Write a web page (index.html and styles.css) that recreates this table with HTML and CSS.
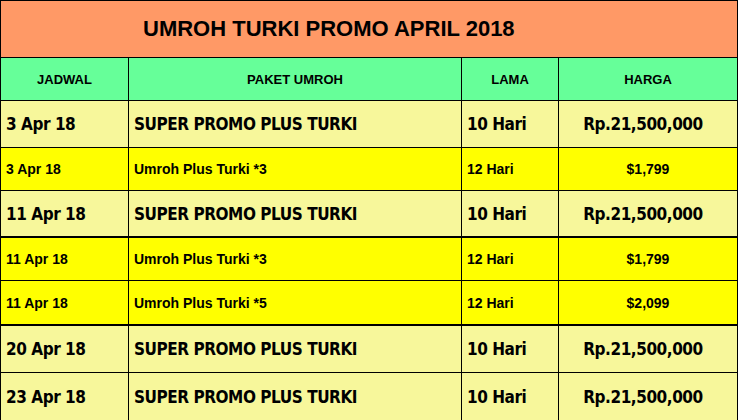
FILE: index.html
```html
<!DOCTYPE html>
<html>
<head>
<meta charset="utf-8">
<link rel="stylesheet" href="styles.css">
</head>
<body>
<div class="sheet">
  <div class="title">UMROH TURKI PROMO APRIL 2018</div>

  <div class="cell head center">JADWAL</div>
  <div class="cell head center">PAKET UMROH</div>
  <div class="cell head center">LAMA</div>
  <div class="cell head center">HARGA</div>

  <div class="cell big">3 Apr 18</div>
  <div class="cell big">SUPER PROMO PLUS TURKI</div>
  <div class="cell big">10 Hari</div>
  <div class="cell big center price">Rp.21,500,000</div>

  <div class="cell small">3 Apr 18</div>
  <div class="cell small">Umroh Plus Turki *3</div>
  <div class="cell small">12 Hari</div>
  <div class="cell small center">$1,799</div>

  <div class="cell big thick">11 Apr 18</div>
  <div class="cell big thick">SUPER PROMO PLUS TURKI</div>
  <div class="cell big thick">10 Hari</div>
  <div class="cell big thick center price">Rp.21,500,000</div>

  <div class="cell small">11 Apr 18</div>
  <div class="cell small">Umroh Plus Turki *3</div>
  <div class="cell small">12 Hari</div>
  <div class="cell small center">$1,799</div>

  <div class="cell small thick tall">11 Apr 18</div>
  <div class="cell small thick tall">Umroh Plus Turki *5</div>
  <div class="cell small thick tall">12 Hari</div>
  <div class="cell small thick tall center">$2,099</div>

  <div class="cell big">20 Apr 18</div>
  <div class="cell big">SUPER PROMO PLUS TURKI</div>
  <div class="cell big">10 Hari</div>
  <div class="cell big center price">Rp.21,500,000</div>

  <div class="cell big last">23 Apr 18</div>
  <div class="cell big last">SUPER PROMO PLUS TURKI</div>
  <div class="cell big last">10 Hari</div>
  <div class="cell big last center price">Rp.21,500,000</div>
</div>
</body>
</html>
```

FILE: styles.css
```css
html, body {
  margin: 0;
  padding: 0;
  background: #ffffff;
  overflow: hidden;
}

.sheet {
  display: grid;
  grid-template-columns: 128px 333px 97px 179px;
  width: 738px;
  box-sizing: border-box;
  border-left: 1px solid #000;
  border-top: 1px solid #000;
  color: #000;
}

.title {
  grid-column: 1 / -1;
  height: 57px;
  box-sizing: border-box;
  border-right: 1px solid #000;
  border-bottom: 1px solid #000;
  background: #ff9966;
  display: flex;
  align-items: center;
  padding-left: 142px;
  font-family: "Liberation Sans", Arial, sans-serif;
  font-weight: bold;
  font-size: 22px;
}

.cell {
  box-sizing: border-box;
  border-right: 1px solid #000;
  border-bottom: 1px solid #000;
  display: flex;
  align-items: center;
  padding-left: 5px;
  white-space: nowrap;
}

.center {
  justify-content: center;
  padding-left: 0;
}

.head {
  height: 43px;
  background: #66ff99;
  font-family: "Liberation Sans", Arial, sans-serif;
  font-weight: bold;
  font-size: 13px;
}

.big {
  height: 47px;
  background: #f7f79b;
  font-family: "DejaVu Sans Condensed", "DejaVu Sans", sans-serif;
  font-weight: bold;
  font-size: 17px;
  letter-spacing: -0.45px;
}

.small {
  height: 43px;
  background: #ffff00;
  font-family: "Liberation Sans", Arial, sans-serif;
  font-weight: bold;
  font-size: 14px;
}

.price {
  padding-right: 10px;
}

.thick {
  border-bottom-width: 2px;
}

.tall {
  height: 45px;
}

.last {
  height: 48px;
}
```
